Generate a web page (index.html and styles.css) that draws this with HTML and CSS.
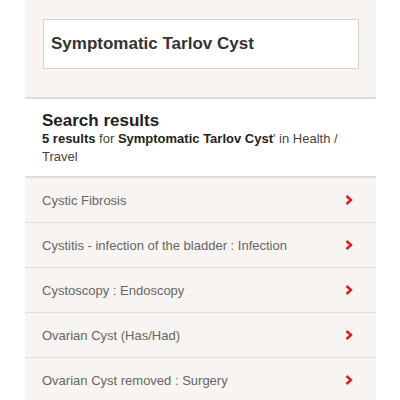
FILE: index.html
```html
<!DOCTYPE html>
<html>
<head>
<meta charset="utf-8">
<link rel="stylesheet" href="styles.css">
</head>
<body>
<div class="page">
  <div class="search-area">
    <div class="search-box">Symptomatic Tarlov Cyst</div>
  </div>
  <div class="results-head">
    <h1 class="title">Search results</h1>
    <p class="summary"><b>5 results</b> for <b>Symptomatic Tarlov Cyst</b>' in Health / Travel</p>
  </div>
  <ul class="results">
    <li class="row"><span>Cystic Fibrosis</span><svg class="chev" viewBox="0 0 8 10"><path d="M1.5 1 L6 5 L1.5 9" fill="none" stroke="#e0191e" stroke-width="2.4"/></svg></li>
    <li class="row"><span>Cystitis - infection of the bladder : Infection</span><svg class="chev" viewBox="0 0 8 10"><path d="M1.5 1 L6 5 L1.5 9" fill="none" stroke="#e0191e" stroke-width="2.4"/></svg></li>
    <li class="row"><span>Cystoscopy : Endoscopy</span><svg class="chev" viewBox="0 0 8 10"><path d="M1.5 1 L6 5 L1.5 9" fill="none" stroke="#e0191e" stroke-width="2.4"/></svg></li>
    <li class="row"><span>Ovarian Cyst (Has/Had)</span><svg class="chev" viewBox="0 0 8 10"><path d="M1.5 1 L6 5 L1.5 9" fill="none" stroke="#e0191e" stroke-width="2.4"/></svg></li>
    <li class="row"><span>Ovarian Cyst removed : Surgery</span><svg class="chev" viewBox="0 0 8 10"><path d="M1.5 1 L6 5 L1.5 9" fill="none" stroke="#e0191e" stroke-width="2.4"/></svg></li>
  </ul>
</div>
</body>
</html>
```
FILE: styles.css
```css
html, body {
  margin: 0;
  padding: 0;
  background: #ffffff;
  font-family: "Liberation Sans", Arial, sans-serif;
}
.page {
  width: 351px;
  margin-left: 25px;
  background: #f7f4f1;
}
.search-area {
  padding: 19px 17px 28px 18px;
  border-bottom: 2px solid #dedbd8;
}
.search-box {
  height: 48px;
  background: #fff;
  border: 1px solid #d4d2d0;
  padding-left: 7px;
  display: flex;
  align-items: center;
  font-size: 17px;
  font-weight: bold;
  color: #333;
}
.results-head {
  background: #fff;
  padding: 12px 17px 10px 17px;
  border-bottom: 2px solid #dedbd8;
}
.title {
  margin: 0;
  font-size: 17px;
  line-height: 19px;
  font-weight: bold;
  color: #222;
}
.summary {
  margin: 0;
  font-size: 13px;
  line-height: 18px;
  color: #444;
}
.summary b { color: #222; }
.results {
  list-style: none;
  margin: 0;
  padding: 0;
}
.row {
  height: 44px;
  border-bottom: 1px solid #e1dedb;
  display: flex;
  align-items: center;
  justify-content: space-between;
  padding: 0 23px 0 17px;
  font-size: 13px;
  color: #666;
}
.chev {
  width: 8px;
  height: 10px;
}
```
